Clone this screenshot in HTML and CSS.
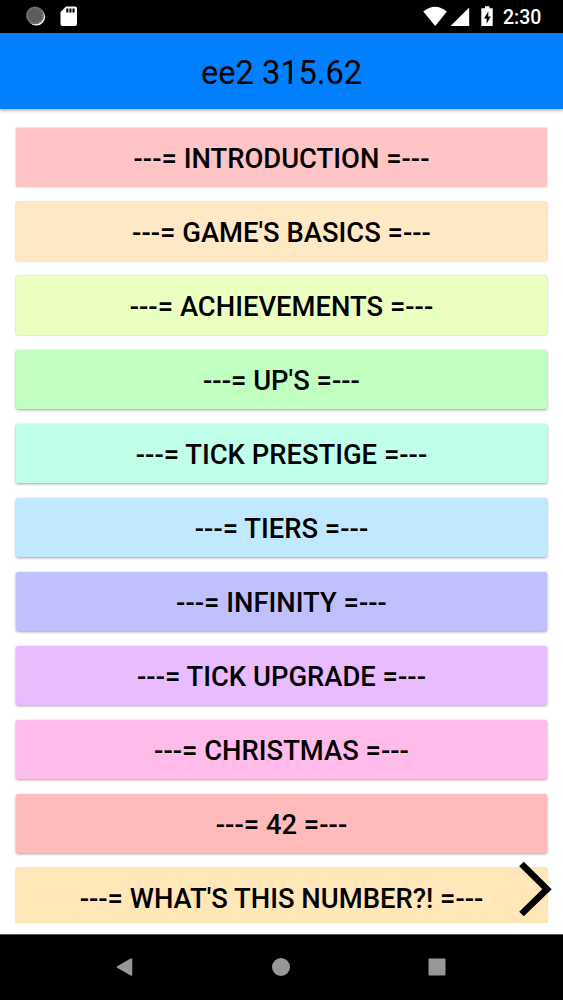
FILE: index.html
```html
<!DOCTYPE html>
<html lang="en">
<head>

	<meta charset="utf-8" />
	<title>ee2 315.62</title>

	<link rel="stylesheet" href="styles.css">

</head>

<body>

<div class="screen">
	<div class="status-bar">
		<svg class="notifications" width="80" height="33" viewBox="0 0 80 33">
			<circle cx="36.3" cy="16.8" r="8.8" fill="#f4f4f4" />
			<circle cx="35" cy="15.4" r="8.9" fill="#5c5c5c" />
			<circle cx="35" cy="15.4" r="7.8" fill="none" stroke="#8c8c8c" stroke-width="1.8" stroke-dasharray="0.8 1.5" />
			<path d="M66 6.5h9q2 0 2 2v15.500q0 2-2 2h-12.500q-2 0-2-2v-12z" fill="#fff" />
			<path d="M66.300 8.500h2.100v4h-2.100zM69.400 8.500h2.100v4h-2.100zM72.500 8.500h2.100v4h-2.100z" fill="#000" />
		</svg>
		<svg class="system" width="80" height="33" viewBox="420 0 80 33">
			<path d="M423.300 11.500q11.700-9.500 23.600 0L435.200 26z" fill="#fff" />
			<path d="M450.500 26L469.200 7.500V26z" fill="#fff" />
			<path d="M485 6.300h4.500v2h3.200v17.700h-11.400V8.300h3.700z" fill="#fff" />
			<path d="M488.400 11.500l-4.500 7h2.700v5.200l4.200-7.200h-2.600z" fill="#000" />
		</svg>
		<span class="clock">2:30</span>
	</div>

	<div class="header">ee2 315.62</div>

	<div class="content">
		<div class="list">
			<div class="item introduction">---= INTRODUCTION =---</div>
			<div class="item basics">---= GAME'S BASICS =---</div>
			<div class="item achievements">---= ACHIEVEMENTS =---</div>
			<div class="item ups">---= UP'S =---</div>
			<div class="item prestige">---= TICK PRESTIGE =---</div>
			<div class="item tiers">---= TIERS =---</div>
			<div class="item infinity">---= INFINITY =---</div>
			<div class="item upgrade">---= TICK UPGRADE =---</div>
			<div class="item christmas">---= CHRISTMAS =---</div>
			<div class="item forty-two">---= 42 =---</div>
			<div class="item number">---= WHAT'S THIS NUMBER?! =---</div>
		</div>
		<svg class="next" width="40" height="60" viewBox="0 0 40 60">
			<path d="M6.500 5L32 30.200L6.500 55" fill="none" stroke="#000" stroke-width="6.6" />
		</svg>
	</div>

	<div class="nav-bar">
		<svg width="20" height="20" viewBox="0 0 20 20"><path d="M2.500 10L16.500 2V18z" fill="#999699" stroke="#999699" stroke-linejoin="round" stroke-width="1.500" /></svg>
		<svg width="20" height="20" viewBox="0 0 20 20"><circle cx="10" cy="10" r="9" fill="#999699" /></svg>
		<svg width="20" height="20" viewBox="0 0 20 20"><rect x="1.500" y="1.500" width="17" height="17" rx="1" fill="#999699" /></svg>
	</div>
</div>

</body>
</html>
```
FILE: styles.css
```css
body {
	margin: 0;
	font-family: 'Roboto', sans-serif;
	color: #000;
}
svg {
	display: block;
}
.screen {
	display: flex;
	flex-direction: column;
	height: 1000px;
	overflow: hidden;
	background: #fff;
}
.status-bar {
	display: flex;
	flex: none;
	height: 33px;
	background: #000;
}
.system {
	margin-left: auto;
}
.clock {
	width: 60px;
	padding-left: 3px;
	font-size: 19.5px;
	font-weight: 500;
	line-height: 35px;
	color: #fff;
}
.header {
	flex: none;
	height: 76px;
	box-sizing: border-box;
	padding-top: 2px;
	background: #0080ff;
	box-shadow: 0 1px 4px rgba(0, 0, 0, 0.4);
	font-size: 32.6px;
	line-height: 76px;
	text-align: center;
}
.content {
	position: relative;
	flex: 1;
}
.list {
	display: flex;
	flex-direction: column;
	gap: 15px;
	height: 795px;
	padding: 19px 16px 0;
	overflow: hidden;
}
.item {
	flex: none;
	height: 59px;
	border-radius: 2px;
	box-shadow: 0 0 2px rgba(0, 0, 0, 0.35);
	font-size: 27.4px;
	font-weight: 500;
	line-height: 62px;
	text-align: center;
}
.introduction {
	background: #ffc4c6;
}
.basics {
	background: #ffe8c4;
}
.achievements {
	background: #eaffc0;
}
.ups {
	background: #c1ffc0;
}
.prestige {
	background: #c0ffe9;
}
.tiers {
	background: #c0e9ff;
}
.infinity {
	background: #c0c0ff;
}
.upgrade {
	background: #e9bcff;
}
.christmas {
	background: #ffbbe9;
}
.forty-two {
	background: #ffbabc;
}
.number {
	background: #ffe7ba;
}
.ups,
.prestige,
.tiers,
.infinity,
.upgrade,
.christmas,
.forty-two {
	box-shadow: 0 1px 3px rgba(0, 0, 0, 0.38);
}
.next {
	position: absolute;
	left: 515px;
	top: 750px;
}
.nav-bar {
	display: flex;
	flex: none;
	align-items: center;
	justify-content: center;
	gap: 136px;
	height: 66px;
	box-sizing: border-box;
	padding: 0 1px 2px 0;
	border-top: 1px solid #555;
	background: #000;
}
```
